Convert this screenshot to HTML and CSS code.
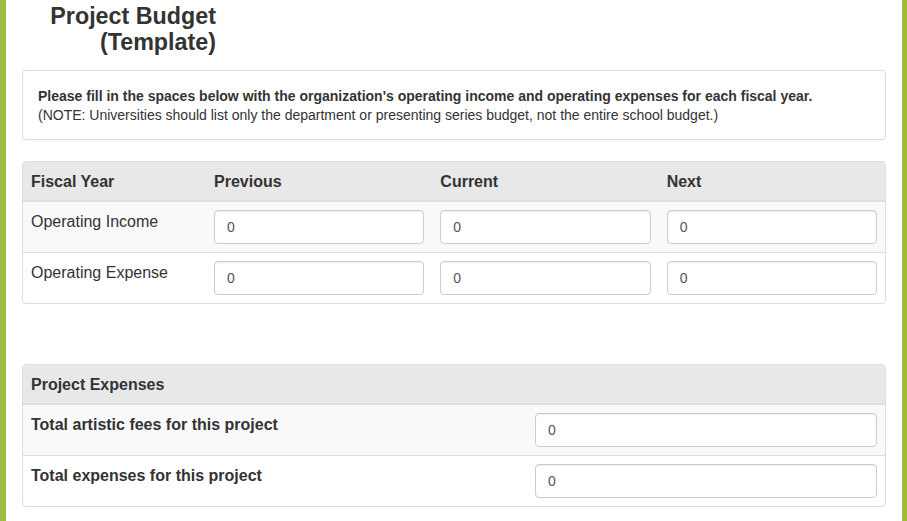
FILE: index.html
```html
<!DOCTYPE html>
<html lang="en">
<head>
  <meta charset="UTF-8">
  <meta name="viewport" content="width=device-width,initial-scale=1">
  <title>Project Budget</title>
  <link rel="stylesheet" href="styles.css">
</head>
<body>
  <div class="page">

    <h3 class="title">Project Budget<br>(Template)</h3>

    <!-- Instrucciones -->
    <div class="panel note">
      <strong>Please fill in the spaces below with the organization's operating income and operating expenses for each fiscal year.</strong><br>
      (NOTE: Universities should list only the department or presenting series budget, not the entire school budget.)
    </div>

    <!-- Presupuesto operativo -->
    <div class="panel">
      <div class="row fiscal head">
        <div class="cell label">Fiscal Year</div>
        <div class="cell label">Previous</div>
        <div class="cell label">Current</div>
        <div class="cell label">Next</div>
      </div>
      <div class="row fiscal striped">
        <div class="cell label">Operating Income</div>
        <div class="cell"><input class="field" value="0"></div>
        <div class="cell"><input class="field" value="0"></div>
        <div class="cell"><input class="field" value="0"></div>
      </div>
      <div class="row fiscal">
        <div class="cell label">Operating Expense</div>
        <div class="cell"><input class="field" value="0"></div>
        <div class="cell"><input class="field" value="0"></div>
        <div class="cell"><input class="field" value="0"></div>
      </div>
    </div>

    <!-- Gastos del proyecto -->
    <div class="panel expenses">
      <div class="row head">
        <div class="cell label">Project Expenses</div>
      </div>
      <div class="row split striped">
        <div class="cell label bold">Total artistic fees for this project</div>
        <div class="cell"><input class="field" value="0"></div>
      </div>
      <div class="row split">
        <div class="cell label bold">Total expenses for this project</div>
        <div class="cell"><input class="field" value="0"></div>
      </div>
    </div>

  </div>
</body>
</html>
```

FILE: styles.css
```css
*{margin:0;padding:0;box-sizing:border-box;}
html,body{height:100%;}
body{
  background:#a0b940;
  font-family:"Liberation Sans",Arial,sans-serif;
  color:#333;
}
.page{
  margin:0 5px 0 6px; min-height:100%;
  background:#fff; padding:3px 16px 10px;
}
/* Título */
.title{
  width:194px; text-align:right;
  font-size:23.3px; line-height:26px; font-weight:bold;
  margin-bottom:15px; color:#333;
}
/* Paneles */
.panel{
  border:1px solid #ddd; border-radius:4px;
  margin-bottom:21px; overflow:hidden;
}
.note{
  padding:16px 15px 14px; font-size:14px; line-height:19px;
  box-shadow:0 1px 1px rgba(0,0,0,0.03);
}
.expenses{margin-top:60px;}
/* Filas tipo tabla */
.row{display:grid; font-size:16px; line-height:22px;}
.row + .row{border-top:1px solid #ddd;}
.row.head{background:#e8e8e8; font-weight:bold; border-bottom:1px solid #ddd;}
.row.striped{background:#f9f9f9;}
.fiscal{grid-template-columns:183px 1fr 1fr 1fr;}
.split{grid-template-columns:504px 1fr;}
.cell{padding:8px;}
.cell.label{padding:9px 8px 7px;}
.bold{font-weight:bold;}
.field{
  display:block; width:100%; height:34px;
  padding:6px 12px; font-size:14px; line-height:20px;
  font-family:"Liberation Sans",Arial,sans-serif;
  color:#555; background:#fff;
  border:1px solid #ccc; border-radius:4px;
  box-shadow:inset 0 1px 1px rgba(0,0,0,0.075);
}
```
